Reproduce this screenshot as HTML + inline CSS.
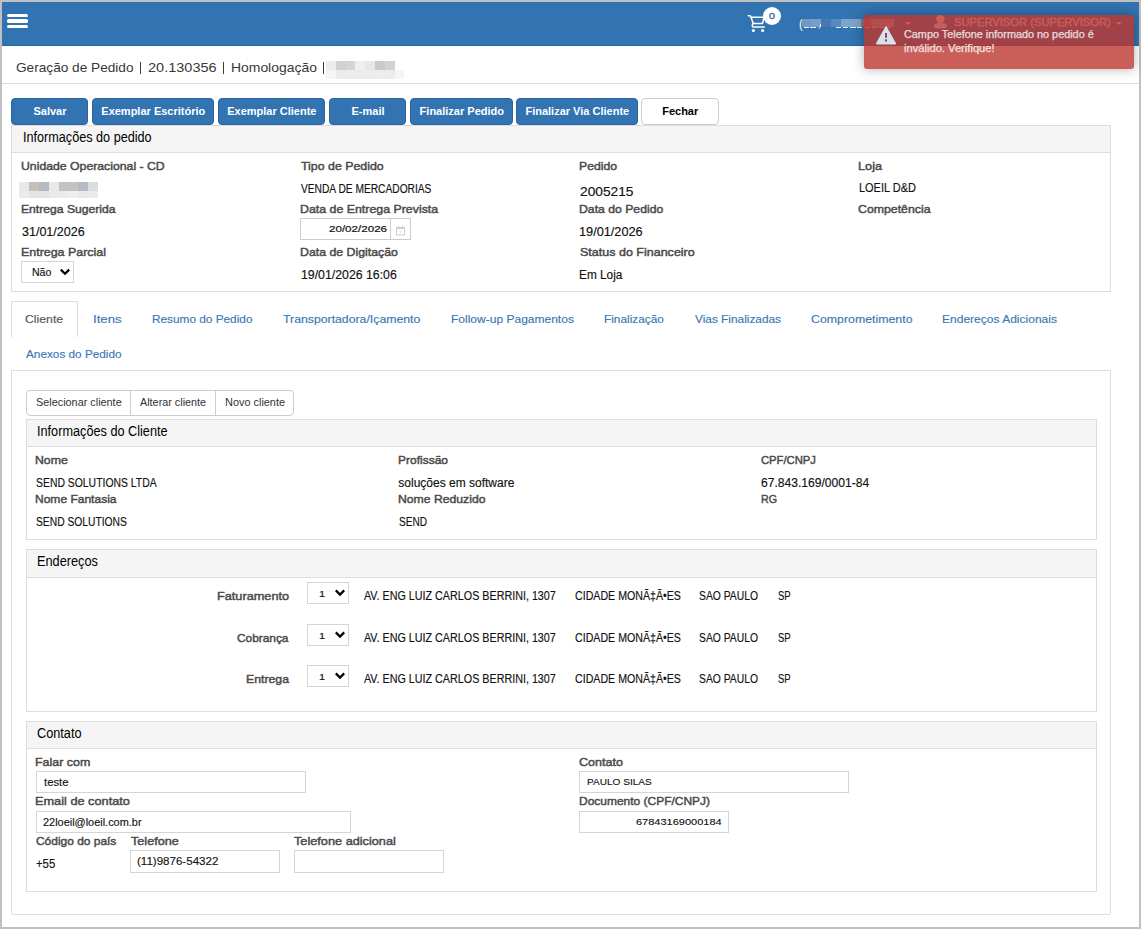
<!DOCTYPE html>
<html><head><meta charset="utf-8"><title>Geração de Pedido</title>
<style>
html,body{margin:0;padding:0}
body{width:1141px;height:929px;position:relative;overflow:hidden;background:#c0c0c0;font-family:'Liberation Sans', sans-serif}
.t{position:absolute;line-height:0;white-space:nowrap}
.b{position:absolute}
</style></head><body>
<div class="b" style="left:2px;top:2px;width:1137px;height:925px;background:#fff"></div>
<div class="b" style="left:2px;top:2px;width:1137px;height:44px;background:#3273b1;border-bottom:1px solid #2367a6;box-sizing:border-box"></div>
<div class="b" style="left:7px;top:13.9px;width:21px;height:3.3px;border-radius:1.6px;background:#fff"></div>
<div class="b" style="left:7px;top:19.4px;width:21px;height:3.3px;border-radius:1.6px;background:#fff"></div>
<div class="b" style="left:7px;top:24.7px;width:21px;height:3.3px;border-radius:1.6px;background:#fff"></div>
<svg class="b" style="left:744px;top:12px" width="24" height="24" viewBox="0 0 24 24">
<path d="M4.2 3.7 H6.4 L9.3 11.4 H18.6 L20 5.2 H7.2" fill="none" stroke="#fff" stroke-width="1.5" stroke-linejoin="round" stroke-linecap="round"/>
<path d="M9.3 11.4 L8.4 12.9 Q7.9 15 9.8 15 H20.3" fill="none" stroke="#fff" stroke-width="1.5" stroke-linecap="round"/>
<circle cx="9.4" cy="18.5" r="1.6" fill="#fff"/><circle cx="18.6" cy="18.5" r="1.6" fill="#fff"/>
</svg>
<div class="b" style="left:763px;top:7px;width:18px;height:18px;border-radius:50%;background:#fff"></div>
<div class="t" style="left:768.78px;top:10px;font:normal 9.5px 'Liberation Sans', sans-serif;color:#3273b1;transform:scaleX(1.1243);transform-origin:0 0;-webkit-text-stroke:0.4px #3273b1;">0</div>
<div class="t" style="left:799.06px;top:16px;font:normal 13px 'Liberation Sans', sans-serif;color:#fff;transform:scaleX(0.8571);transform-origin:0 0;">(</div>
<div class="b" style="left:802px;top:19px;width:9px;height:8px;background:#7199c5"></div>
<div class="b" style="left:811px;top:19px;width:10px;height:8px;background:#76a0cb"></div>
<div class="b" style="left:821px;top:19px;width:10px;height:8px;background:#4679b3"></div>
<div class="b" style="left:831px;top:19px;width:10px;height:8px;background:#5789c0"></div>
<div class="b" style="left:841px;top:19px;width:9px;height:8px;background:#78a6cf"></div>
<div class="b" style="left:850px;top:19px;width:11px;height:8px;background:#7aa3c8"></div>
<div class="b" style="left:861px;top:19px;width:10px;height:8px;background:#9a6a7a"></div>
<div class="b" style="left:871px;top:19px;width:23px;height:8px;background:#90aecf"></div>
<div class="b" style="left:804px;top:27px;width:5px;height:1.3000000000000007px;background:rgba(255,255,255,0.9)"></div>
<div class="b" style="left:810px;top:27px;width:6px;height:1.3000000000000007px;background:rgba(255,255,255,0.9)"></div>
<div class="b" style="left:836px;top:27px;width:5px;height:1.3000000000000007px;background:rgba(255,255,255,0.9)"></div>
<div class="b" style="left:843px;top:27px;width:5px;height:1.3000000000000007px;background:rgba(255,255,255,0.9)"></div>
<div class="b" style="left:850px;top:27px;width:6px;height:1.3000000000000007px;background:rgba(255,255,255,0.9)"></div>
<div class="b" style="left:857px;top:27px;width:5px;height:1.3000000000000007px;background:rgba(255,255,255,0.9)"></div>
<div class="b" style="left:865px;top:27px;width:5px;height:1.3000000000000007px;background:rgba(255,255,255,0.9)"></div>
<div class="b" style="left:872px;top:27px;width:5px;height:1.3000000000000007px;background:rgba(255,255,255,0.9)"></div>
<div class="b" style="left:879px;top:27px;width:5px;height:1.3000000000000007px;background:rgba(255,255,255,0.9)"></div>
<div class="b" style="left:886px;top:27px;width:5px;height:1.3000000000000007px;background:rgba(255,255,255,0.9)"></div>
<div class="b" style="left:817px;top:24px;width:3px;height:5px;border-right:1.3px solid #fff;border-radius:0 0 4px 0"></div>
<div class="b" style="left:905px;top:22px;width:0;height:0;border-left:3px solid transparent;border-right:3px solid transparent;border-top:3px solid #fff"></div>
<svg class="b" style="left:933px;top:15px" width="15" height="14" viewBox="0 0 15 14">
<circle cx="7.4" cy="4.1" r="4.2" fill="#fff"/><path d="M0.9 11 Q0.9 8.2 4 8.2 H10.8 Q13.9 8.2 13.9 11 Q13.9 13.6 7.4 13.6 Q0.9 13.6 0.9 11 Z" fill="#fff"/></svg>
<div class="t" style="left:953.89px;top:16px;font:normal 11px 'Liberation Sans', sans-serif;color:#fff;transform:scaleX(1.0162);transform-origin:0 0;-webkit-text-stroke:0.35px #fff;">SUPERVISOR (SUPERVISOR)</div>
<div class="b" style="left:1116px;top:22px;width:0;height:0;border-left:3px solid transparent;border-right:3px solid transparent;border-top:3px solid #fff"></div>
<div class="t" style="left:15.54px;top:60px;font:normal 13px 'Liberation Sans', sans-serif;color:#383838;transform:scaleX(1.0489);transform-origin:0 0;">Geração de Pedido</div>
<div class="t" style="left:147.90px;top:60px;font:normal 13px 'Liberation Sans', sans-serif;color:#383838;transform:scaleX(1.1180);transform-origin:0 0;">20.130356</div>
<div class="t" style="left:230.73px;top:60px;font:normal 13px 'Liberation Sans', sans-serif;color:#383838;transform:scaleX(1.0705);transform-origin:0 0;">Homologação</div>
<div class="b" style="left:140px;top:62px;width:1px;height:12px;background:#3a3a3a"></div>
<div class="b" style="left:223px;top:62px;width:1px;height:12px;background:#3a3a3a"></div>
<div class="b" style="left:323px;top:62px;width:1px;height:12px;background:#3a3a3a"></div>
<div class="b" style="left:326px;top:61px;width:10px;height:9px;background:#ececec"></div>
<div class="b" style="left:336px;top:61px;width:10px;height:9px;background:#d0d1d3"></div>
<div class="b" style="left:346px;top:61px;width:9px;height:9px;background:#d4d5d6"></div>
<div class="b" style="left:355px;top:61px;width:10px;height:9px;background:#efefef"></div>
<div class="b" style="left:365px;top:61px;width:10px;height:9px;background:#e8e7e5"></div>
<div class="b" style="left:375px;top:61px;width:10px;height:9px;background:#c9c9ca"></div>
<div class="b" style="left:385px;top:61px;width:10px;height:9px;background:#d1d2d4"></div>
<div class="b" style="left:326px;top:70px;width:10px;height:8.5px;background:#f5f5f5"></div>
<div class="b" style="left:336px;top:70px;width:10px;height:8.5px;background:#ebebeb"></div>
<div class="b" style="left:346px;top:70px;width:9px;height:8.5px;background:#ececec"></div>
<div class="b" style="left:355px;top:70px;width:10px;height:8.5px;background:#ebebeb"></div>
<div class="b" style="left:365px;top:70px;width:10px;height:8.5px;background:#ececec"></div>
<div class="b" style="left:375px;top:70px;width:10px;height:8.5px;background:#ededed"></div>
<div class="b" style="left:385px;top:70px;width:10px;height:8.5px;background:#ebebeb"></div>
<div class="b" style="left:395px;top:70px;width:9px;height:8.5px;background:#f5f5f5"></div>
<div class="b" style="left:2px;top:83px;width:1137px;height:1px;background:#ddd"></div>
<div class="b" style="left:11px;top:98px;width:77px;height:27px;background:#3274b2;border:1px solid #2a65a0;box-sizing:border-box;border-radius:4px"></div>
<div class="t" style="left:33.44px;top:105px;font:bold 11px 'Liberation Sans', sans-serif;color:#fff;">Salvar</div>
<div class="b" style="left:92px;top:98px;width:122px;height:27px;background:#3274b2;border:1px solid #2a65a0;box-sizing:border-box;border-radius:4px"></div>
<div class="t" style="left:101.31px;top:105px;font:bold 11px 'Liberation Sans', sans-serif;color:#fff;">Exemplar Escritório</div>
<div class="b" style="left:218px;top:98px;width:107px;height:27px;background:#3274b2;border:1px solid #2a65a0;box-sizing:border-box;border-radius:4px"></div>
<div class="t" style="left:227.19px;top:105px;font:bold 11px 'Liberation Sans', sans-serif;color:#fff;">Exemplar Cliente</div>
<div class="b" style="left:329px;top:98px;width:77px;height:27px;background:#3274b2;border:1px solid #2a65a0;box-sizing:border-box;border-radius:4px"></div>
<div class="t" style="left:351.50px;top:105px;font:bold 11px 'Liberation Sans', sans-serif;color:#fff;">E-mail</div>
<div class="b" style="left:410px;top:98px;width:103px;height:27px;background:#3274b2;border:1px solid #2a65a0;box-sizing:border-box;border-radius:4px"></div>
<div class="t" style="left:419.62px;top:105px;font:bold 11px 'Liberation Sans', sans-serif;color:#fff;">Finalizar Pedido</div>
<div class="b" style="left:516px;top:98px;width:122px;height:27px;background:#3274b2;border:1px solid #2a65a0;box-sizing:border-box;border-radius:4px"></div>
<div class="t" style="left:525.44px;top:105px;font:bold 11px 'Liberation Sans', sans-serif;color:#fff;">Finalizar Via Cliente</div>
<div class="b" style="left:641px;top:98px;width:78px;height:27px;background:#fff;border:1px solid #ccc;box-sizing:border-box;border-radius:4px"></div>
<div class="t" style="left:662.19px;top:105px;font:bold 11px 'Liberation Sans', sans-serif;color:#000;">Fechar</div>
<div class="b" style="left:11px;top:125px;width:1100px;height:167px;border:1px solid #ddd;box-sizing:border-box"></div>
<div class="b" style="left:12px;top:126px;width:1098px;height:26px;background:#f5f5f5;border-bottom:1px solid #ddd"></div>
<div class="t" style="left:22.57px;top:129px;font:normal 14px 'Liberation Sans', sans-serif;color:#000;transform:scaleX(0.9031);transform-origin:0 0;">Informações do pedido</div>
<div class="t" style="left:20.87px;top:160px;font:normal 11.5px 'Liberation Sans', sans-serif;color:#4a4a4a;transform:scaleX(1.0653);transform-origin:0 0;-webkit-text-stroke:0.45px #4a4a4a;">Unidade Operacional - CD</div>
<div class="t" style="left:300.83px;top:160px;font:normal 11.5px 'Liberation Sans', sans-serif;color:#4a4a4a;transform:scaleX(1.0756);transform-origin:0 0;-webkit-text-stroke:0.45px #4a4a4a;">Tipo de Pedido</div>
<div class="t" style="left:579.17px;top:160px;font:normal 11.5px 'Liberation Sans', sans-serif;color:#4a4a4a;transform:scaleX(1.0644);transform-origin:0 0;-webkit-text-stroke:0.45px #4a4a4a;">Pedido</div>
<div class="t" style="left:857.83px;top:160px;font:normal 11.5px 'Liberation Sans', sans-serif;color:#4a4a4a;transform:scaleX(1.1067);transform-origin:0 0;-webkit-text-stroke:0.45px #4a4a4a;">Loja</div>
<div class="b" style="left:19px;top:182px;width:10px;height:9px;background:#e8e8e8"></div>
<div class="b" style="left:29px;top:182px;width:10px;height:9px;background:#c8bfbb"></div>
<div class="b" style="left:39px;top:182px;width:10px;height:9px;background:#b8bac2"></div>
<div class="b" style="left:49px;top:182px;width:10px;height:9px;background:#e8eaea"></div>
<div class="b" style="left:59px;top:182px;width:9px;height:9px;background:#c4c3c2"></div>
<div class="b" style="left:68px;top:182px;width:10px;height:9px;background:#c4c3c2"></div>
<div class="b" style="left:78px;top:182px;width:10px;height:9px;background:#b5bac5"></div>
<div class="b" style="left:88px;top:182px;width:10px;height:9px;background:#dcdde0"></div>
<div class="b" style="left:19px;top:191px;width:10px;height:7px;background:#ebebeb"></div>
<div class="b" style="left:29px;top:191px;width:10px;height:7px;background:#e8e4e3"></div>
<div class="b" style="left:39px;top:191px;width:10px;height:7px;background:#e3e5e4"></div>
<div class="b" style="left:49px;top:191px;width:10px;height:7px;background:#e9eaeb"></div>
<div class="b" style="left:59px;top:191px;width:9px;height:7px;background:#eaeaea"></div>
<div class="b" style="left:68px;top:191px;width:10px;height:7px;background:#efeeea"></div>
<div class="b" style="left:78px;top:191px;width:10px;height:7px;background:#e8e9eb"></div>
<div class="b" style="left:88px;top:191px;width:10px;height:7px;background:#eaebed"></div>
<div class="t" style="left:301.30px;top:182px;font:normal 12px 'Liberation Sans', sans-serif;color:#111;transform:scaleX(0.8504);transform-origin:0 0;-webkit-text-stroke:0.15px #111;">VENDA DE MERCADORIAS</div>
<div class="t" style="left:579.54px;top:184px;font:normal 13px 'Liberation Sans', sans-serif;color:#111;transform:scaleX(1.0566);transform-origin:0 0;-webkit-text-stroke:0.15px #111;">2005215</div>
<div class="t" style="left:858.59px;top:181px;font:normal 12px 'Liberation Sans', sans-serif;color:#111;transform:scaleX(0.9136);transform-origin:0 0;-webkit-text-stroke:0.15px #111;">LOEIL D&amp;D</div>
<div class="t" style="left:20.88px;top:203px;font:normal 11.5px 'Liberation Sans', sans-serif;color:#4a4a4a;transform:scaleX(1.0553);transform-origin:0 0;-webkit-text-stroke:0.45px #4a4a4a;">Entrega Sugerida</div>
<div class="t" style="left:300.16px;top:203px;font:normal 11.5px 'Liberation Sans', sans-serif;color:#4a4a4a;transform:scaleX(1.0752);transform-origin:0 0;-webkit-text-stroke:0.45px #4a4a4a;">Data de Entrega Prevista</div>
<div class="t" style="left:579.17px;top:203px;font:normal 11.5px 'Liberation Sans', sans-serif;color:#4a4a4a;transform:scaleX(1.0631);transform-origin:0 0;-webkit-text-stroke:0.45px #4a4a4a;">Data do Pedido</div>
<div class="t" style="left:858.26px;top:203px;font:normal 11.5px 'Liberation Sans', sans-serif;color:#4a4a4a;transform:scaleX(1.0709);transform-origin:0 0;-webkit-text-stroke:0.45px #4a4a4a;">Competência</div>
<div class="t" style="left:21.91px;top:225px;font:normal 12px 'Liberation Sans', sans-serif;color:#111;transform:scaleX(1.0436);transform-origin:0 0;-webkit-text-stroke:0.15px #111;">31/01/2026</div>
<div class="b" style="left:300px;top:218px;width:111px;height:22px;border:1px solid #ccc;box-sizing:border-box;background:#fff"></div>
<div class="b" style="left:390px;top:218px;width:1px;height:22px;background:#ccc"></div>
<div class="t" style="left:329.39px;top:223px;font:normal 9.5px 'Liberation Sans', sans-serif;color:#111;transform:scaleX(1.2204);transform-origin:0 0;-webkit-text-stroke:0.2px #111;">20/02/2026</div>
<svg class="b" style="left:395px;top:225px" width="11" height="11" viewBox="0 0 11 11">
<rect x="1.5" y="2.5" width="8" height="7.5" fill="none" stroke="#cfcfcf" stroke-width="1"/>
<rect x="1.5" y="2" width="8" height="2" fill="#cfcfcf"/><rect x="3" y="1" width="1" height="1.5" fill="#cfcfcf"/><rect x="7" y="1" width="1" height="1.5" fill="#cfcfcf"/>
<path d="M4.5 5.8 H6.5 L5.3 8.5" fill="none" stroke="#dcdcdc" stroke-width="0.8"/></svg>
<div class="t" style="left:579.27px;top:225px;font:normal 12px 'Liberation Sans', sans-serif;color:#111;transform:scaleX(1.0593);transform-origin:0 0;-webkit-text-stroke:0.15px #111;">19/01/2026</div>
<div class="t" style="left:20.85px;top:246px;font:normal 11.5px 'Liberation Sans', sans-serif;color:#4a4a4a;transform:scaleX(1.0802);transform-origin:0 0;-webkit-text-stroke:0.45px #4a4a4a;">Entrega Parcial</div>
<div class="t" style="left:300.16px;top:246px;font:normal 11.5px 'Liberation Sans', sans-serif;color:#4a4a4a;transform:scaleX(1.0709);transform-origin:0 0;-webkit-text-stroke:0.45px #4a4a4a;">Data de Digitação</div>
<div class="t" style="left:579.56px;top:246px;font:normal 11.5px 'Liberation Sans', sans-serif;color:#4a4a4a;transform:scaleX(1.0878);transform-origin:0 0;-webkit-text-stroke:0.45px #4a4a4a;">Status do Financeiro</div>
<div class="b" style="left:21px;top:261px;width:53px;height:22px;border:1px solid #d5d5d5;box-sizing:border-box;background:#fff"></div>
<div class="t" style="left:32.16px;top:266px;font:normal 11px 'Liberation Sans', sans-serif;color:#111;transform:scaleX(0.9589);transform-origin:0 0;-webkit-text-stroke:0.15px #111;">Não</div>
<svg class="b" style="left:59px;top:268px" width="12" height="8" viewBox="0 0 12 8"><path d="M1.8 1.6 L6 5.8 L10.2 1.6" fill="none" stroke="#000" stroke-width="2.2"/></svg>
<div class="t" style="left:301.10px;top:268px;font:normal 12px 'Liberation Sans', sans-serif;color:#111;transform:scaleX(1.0250);transform-origin:0 0;-webkit-text-stroke:0.15px #111;">19/01/2026 16:06</div>
<div class="t" style="left:579.21px;top:268px;font:normal 12px 'Liberation Sans', sans-serif;color:#111;transform:scaleX(0.9855);transform-origin:0 0;-webkit-text-stroke:0.15px #111;">Em Loja</div>
<div class="b" style="left:11px;top:301px;width:67px;height:36px;border:1px solid #ddd;border-bottom:none;box-sizing:border-box;background:#fff"></div>
<div class="t" style="left:25.37px;top:313px;font:normal 11.5px 'Liberation Sans', sans-serif;color:#555;transform:scaleX(1.0647);transform-origin:0 0;-webkit-text-stroke:0.15px #555;">Cliente</div>
<div class="t" style="left:93.16px;top:313px;font:normal 11.5px 'Liberation Sans', sans-serif;color:#3a77b5;transform:scaleX(1.1447);transform-origin:0 0;-webkit-text-stroke:0.15px #3a77b5;">Itens</div>
<div class="t" style="left:151.80px;top:313px;font:normal 11.5px 'Liberation Sans', sans-serif;color:#3a77b5;transform:scaleX(1.0269);transform-origin:0 0;-webkit-text-stroke:0.15px #3a77b5;">Resumo do Pedido</div>
<div class="t" style="left:283.03px;top:313px;font:normal 11.5px 'Liberation Sans', sans-serif;color:#3a77b5;transform:scaleX(1.0669);transform-origin:0 0;-webkit-text-stroke:0.15px #3a77b5;">Transportadora/Içamento</div>
<div class="t" style="left:450.69px;top:313px;font:normal 11.5px 'Liberation Sans', sans-serif;color:#3a77b5;transform:scaleX(1.0449);transform-origin:0 0;-webkit-text-stroke:0.15px #3a77b5;">Follow-up Pagamentos</div>
<div class="t" style="left:603.90px;top:313px;font:normal 11.5px 'Liberation Sans', sans-serif;color:#3a77b5;transform:scaleX(1.0303);transform-origin:0 0;-webkit-text-stroke:0.15px #3a77b5;">Finalização</div>
<div class="t" style="left:694.70px;top:313px;font:normal 11.5px 'Liberation Sans', sans-serif;color:#3a77b5;transform:scaleX(1.0298);transform-origin:0 0;-webkit-text-stroke:0.15px #3a77b5;">Vias Finalizadas</div>
<div class="t" style="left:810.66px;top:313px;font:normal 11.5px 'Liberation Sans', sans-serif;color:#3a77b5;transform:scaleX(1.0731);transform-origin:0 0;-webkit-text-stroke:0.15px #3a77b5;">Comprometimento</div>
<div class="t" style="left:941.79px;top:313px;font:normal 11.5px 'Liberation Sans', sans-serif;color:#3a77b5;transform:scaleX(1.0455);transform-origin:0 0;-webkit-text-stroke:0.15px #3a77b5;">Endereços Adicionais</div>
<div class="t" style="left:25.90px;top:348px;font:normal 11.5px 'Liberation Sans', sans-serif;color:#3a77b5;transform:scaleX(1.0237);transform-origin:0 0;-webkit-text-stroke:0.15px #3a77b5;">Anexos do Pedido</div>
<div class="b" style="left:11px;top:370px;width:1100px;height:545px;border:1px solid #ddd;box-sizing:border-box;border-radius:0 0 2px 2px"></div>
<div class="b" style="left:26px;top:390px;width:268px;height:26px;border:1px solid #ccc;box-sizing:border-box;border-radius:4px;background:#fff"></div>
<div class="b" style="left:130px;top:390px;width:1px;height:26px;background:#ccc"></div>
<div class="b" style="left:215px;top:390px;width:1px;height:26px;background:#ccc"></div>
<div class="t" style="left:35.53px;top:396px;font:normal 11.5px 'Liberation Sans', sans-serif;color:#333;transform:scaleX(0.9437);transform-origin:0 0;">Selecionar cliente</div>
<div class="t" style="left:140.20px;top:396px;font:normal 11.5px 'Liberation Sans', sans-serif;color:#333;transform:scaleX(0.9405);transform-origin:0 0;">Alterar cliente</div>
<div class="t" style="left:224.77px;top:396px;font:normal 11.5px 'Liberation Sans', sans-serif;color:#333;transform:scaleX(0.9487);transform-origin:0 0;">Novo cliente</div>
<div class="b" style="left:26px;top:419px;width:1071px;height:121px;border:1px solid #ddd;box-sizing:border-box"></div>
<div class="b" style="left:27px;top:420px;width:1069px;height:26px;background:#f5f5f5;border-bottom:1px solid #ddd"></div>
<div class="t" style="left:36.67px;top:423px;font:normal 14px 'Liberation Sans', sans-serif;color:#000;transform:scaleX(0.9069);transform-origin:0 0;">Informações do Cliente</div>
<div class="t" style="left:35.47px;top:454px;font:normal 11.5px 'Liberation Sans', sans-serif;color:#4a4a4a;transform:scaleX(1.0673);transform-origin:0 0;-webkit-text-stroke:0.45px #4a4a4a;">Nome</div>
<div class="t" style="left:398.29px;top:454px;font:normal 11.5px 'Liberation Sans', sans-serif;color:#4a4a4a;transform:scaleX(1.0430);transform-origin:0 0;-webkit-text-stroke:0.45px #4a4a4a;">Profissão</div>
<div class="t" style="left:760.91px;top:454px;font:normal 11.5px 'Liberation Sans', sans-serif;color:#4a4a4a;transform:scaleX(0.9779);transform-origin:0 0;-webkit-text-stroke:0.45px #4a4a4a;">CPF/CNPJ</div>
<div class="t" style="left:36.27px;top:476px;font:normal 12px 'Liberation Sans', sans-serif;color:#111;transform:scaleX(0.8671);transform-origin:0 0;-webkit-text-stroke:0.15px #111;">SEND SOLUTIONS LTDA</div>
<div class="t" style="left:398.32px;top:476px;font:normal 12px 'Liberation Sans', sans-serif;color:#111;-webkit-text-stroke:0.15px #111;">soluções em software</div>
<div class="t" style="left:760.67px;top:476px;font:normal 12px 'Liberation Sans', sans-serif;color:#111;transform:scaleX(1.0075);transform-origin:0 0;-webkit-text-stroke:0.15px #111;">67.843.169/0001-84</div>
<div class="t" style="left:35.49px;top:493px;font:normal 11.5px 'Liberation Sans', sans-serif;color:#4a4a4a;transform:scaleX(1.0454);transform-origin:0 0;-webkit-text-stroke:0.45px #4a4a4a;">Nome Fantasia</div>
<div class="t" style="left:398.27px;top:493px;font:normal 11.5px 'Liberation Sans', sans-serif;color:#4a4a4a;transform:scaleX(1.0612);transform-origin:0 0;-webkit-text-stroke:0.45px #4a4a4a;">Nome Reduzido</div>
<div class="t" style="left:760.58px;top:493px;font:normal 11.5px 'Liberation Sans', sans-serif;color:#4a4a4a;transform:scaleX(0.9342);transform-origin:0 0;-webkit-text-stroke:0.45px #4a4a4a;">RG</div>
<div class="t" style="left:36.27px;top:515px;font:normal 12px 'Liberation Sans', sans-serif;color:#111;transform:scaleX(0.8571);transform-origin:0 0;-webkit-text-stroke:0.15px #111;">SEND SOLUTIONS</div>
<div class="t" style="left:398.68px;top:515px;font:normal 12px 'Liberation Sans', sans-serif;color:#111;transform:scaleX(0.8403);transform-origin:0 0;-webkit-text-stroke:0.15px #111;">SEND</div>
<div class="b" style="left:26px;top:549px;width:1071px;height:163px;border:1px solid #ddd;box-sizing:border-box"></div>
<div class="b" style="left:27px;top:550px;width:1069px;height:27px;background:#f5f5f5;border-bottom:1px solid #ddd"></div>
<div class="t" style="left:36.78px;top:553px;font:normal 14px 'Liberation Sans', sans-serif;color:#000;transform:scaleX(0.9103);transform-origin:0 0;">Endereços</div>
<div class="t" style="left:217.13px;top:590px;font:normal 11.5px 'Liberation Sans', sans-serif;color:#4a4a4a;transform:scaleX(1.1053);transform-origin:0 0;-webkit-text-stroke:0.45px #4a4a4a;">Faturamento</div>
<div class="b" style="left:307px;top:582px;width:42px;height:22px;border:1px solid #d5d5d5;box-sizing:border-box;background:#fff"></div>
<div class="t" style="left:318.63px;top:589px;font:normal 9px 'Liberation Sans', sans-serif;color:#111;transform:scaleX(1.2250);transform-origin:0 0;-webkit-text-stroke:0.15px #111;">1</div>
<svg class="b" style="left:334px;top:589px" width="12" height="8" viewBox="0 0 12 8"><path d="M1.8 1.4 L6 5.6 L10.2 1.4" fill="none" stroke="#000" stroke-width="2.2"/></svg>
<div class="t" style="left:363.80px;top:589px;font:normal 12px 'Liberation Sans', sans-serif;color:#111;transform:scaleX(0.8960);transform-origin:0 0;-webkit-text-stroke:0.15px #111;">AV. ENG LUIZ CARLOS BERRINI, 1307</div>
<div class="t" style="left:575.05px;top:589px;font:normal 12px 'Liberation Sans', sans-serif;color:#111;transform:scaleX(0.8862);transform-origin:0 0;-webkit-text-stroke:0.15px #111;">CIDADE MONÃ‡Ã•ES</div>
<div class="t" style="left:698.97px;top:589px;font:normal 12px 'Liberation Sans', sans-serif;color:#111;transform:scaleX(0.8609);transform-origin:0 0;-webkit-text-stroke:0.15px #111;">SAO PAULO</div>
<div class="t" style="left:777.50px;top:589px;font:normal 12px 'Liberation Sans', sans-serif;color:#111;transform:scaleX(0.7933);transform-origin:0 0;-webkit-text-stroke:0.15px #111;">SP</div>
<div class="t" style="left:237.28px;top:632px;font:normal 11.5px 'Liberation Sans', sans-serif;color:#4a4a4a;transform:scaleX(1.0316);transform-origin:0 0;-webkit-text-stroke:0.45px #4a4a4a;">Cobrança</div>
<div class="b" style="left:307px;top:624px;width:42px;height:22px;border:1px solid #d5d5d5;box-sizing:border-box;background:#fff"></div>
<div class="t" style="left:318.63px;top:631px;font:normal 9px 'Liberation Sans', sans-serif;color:#111;transform:scaleX(1.2250);transform-origin:0 0;-webkit-text-stroke:0.15px #111;">1</div>
<svg class="b" style="left:334px;top:631px" width="12" height="8" viewBox="0 0 12 8"><path d="M1.8 1.4 L6 5.6 L10.2 1.4" fill="none" stroke="#000" stroke-width="2.2"/></svg>
<div class="t" style="left:363.80px;top:631px;font:normal 12px 'Liberation Sans', sans-serif;color:#111;transform:scaleX(0.8960);transform-origin:0 0;-webkit-text-stroke:0.15px #111;">AV. ENG LUIZ CARLOS BERRINI, 1307</div>
<div class="t" style="left:575.05px;top:631px;font:normal 12px 'Liberation Sans', sans-serif;color:#111;transform:scaleX(0.8862);transform-origin:0 0;-webkit-text-stroke:0.15px #111;">CIDADE MONÃ‡Ã•ES</div>
<div class="t" style="left:698.97px;top:631px;font:normal 12px 'Liberation Sans', sans-serif;color:#111;transform:scaleX(0.8609);transform-origin:0 0;-webkit-text-stroke:0.15px #111;">SAO PAULO</div>
<div class="t" style="left:777.50px;top:631px;font:normal 12px 'Liberation Sans', sans-serif;color:#111;transform:scaleX(0.7933);transform-origin:0 0;-webkit-text-stroke:0.15px #111;">SP</div>
<div class="t" style="left:245.77px;top:673px;font:normal 11.5px 'Liberation Sans', sans-serif;color:#4a4a4a;transform:scaleX(1.0672);transform-origin:0 0;-webkit-text-stroke:0.45px #4a4a4a;">Entrega</div>
<div class="b" style="left:307px;top:665px;width:42px;height:22px;border:1px solid #d5d5d5;box-sizing:border-box;background:#fff"></div>
<div class="t" style="left:318.63px;top:672px;font:normal 9px 'Liberation Sans', sans-serif;color:#111;transform:scaleX(1.2250);transform-origin:0 0;-webkit-text-stroke:0.15px #111;">1</div>
<svg class="b" style="left:334px;top:672px" width="12" height="8" viewBox="0 0 12 8"><path d="M1.8 1.4 L6 5.6 L10.2 1.4" fill="none" stroke="#000" stroke-width="2.2"/></svg>
<div class="t" style="left:363.80px;top:672px;font:normal 12px 'Liberation Sans', sans-serif;color:#111;transform:scaleX(0.8960);transform-origin:0 0;-webkit-text-stroke:0.15px #111;">AV. ENG LUIZ CARLOS BERRINI, 1307</div>
<div class="t" style="left:575.05px;top:672px;font:normal 12px 'Liberation Sans', sans-serif;color:#111;transform:scaleX(0.8862);transform-origin:0 0;-webkit-text-stroke:0.15px #111;">CIDADE MONÃ‡Ã•ES</div>
<div class="t" style="left:698.97px;top:672px;font:normal 12px 'Liberation Sans', sans-serif;color:#111;transform:scaleX(0.8609);transform-origin:0 0;-webkit-text-stroke:0.15px #111;">SAO PAULO</div>
<div class="t" style="left:777.50px;top:672px;font:normal 12px 'Liberation Sans', sans-serif;color:#111;transform:scaleX(0.7933);transform-origin:0 0;-webkit-text-stroke:0.15px #111;">SP</div>
<div class="b" style="left:26px;top:721px;width:1071px;height:171px;border:1px solid #ddd;box-sizing:border-box"></div>
<div class="b" style="left:27px;top:722px;width:1069px;height:26px;background:#f5f5f5;border-bottom:1px solid #ddd"></div>
<div class="t" style="left:37.23px;top:725px;font:normal 14px 'Liberation Sans', sans-serif;color:#000;transform:scaleX(0.9086);transform-origin:0 0;">Contato</div>
<div class="t" style="left:35.45px;top:756px;font:normal 11.5px 'Liberation Sans', sans-serif;color:#4a4a4a;transform:scaleX(1.0831);transform-origin:0 0;-webkit-text-stroke:0.45px #4a4a4a;">Falar com</div>
<div class="b" style="left:36px;top:771px;width:270px;height:22px;border:1px solid #d5d5d5;box-sizing:border-box;background:#fff"></div>
<div class="t" style="left:43.86px;top:777px;font:normal 10px 'Liberation Sans', sans-serif;color:#111;transform:scaleX(1.1314);transform-origin:0 0;-webkit-text-stroke:0.12px #111;">teste</div>
<div class="t" style="left:35.43px;top:795px;font:normal 11.5px 'Liberation Sans', sans-serif;color:#4a4a4a;transform:scaleX(1.1082);transform-origin:0 0;-webkit-text-stroke:0.45px #4a4a4a;">Email de contato</div>
<div class="b" style="left:36px;top:811px;width:315px;height:22px;border:1px solid #d5d5d5;box-sizing:border-box;background:#fff"></div>
<div class="t" style="left:43.45px;top:817px;font:normal 10px 'Liberation Sans', sans-serif;color:#111;transform:scaleX(1.0923);transform-origin:0 0;-webkit-text-stroke:0.12px #111;">22loeil@loeil.com.br</div>
<div class="t" style="left:35.88px;top:835px;font:normal 11.5px 'Liberation Sans', sans-serif;color:#4a4a4a;transform:scaleX(1.0383);transform-origin:0 0;-webkit-text-stroke:0.45px #4a4a4a;">Código do país</div>
<div class="t" style="left:130.73px;top:835px;font:normal 11.5px 'Liberation Sans', sans-serif;color:#4a4a4a;transform:scaleX(1.0995);transform-origin:0 0;-webkit-text-stroke:0.45px #4a4a4a;">Telefone</div>
<div class="t" style="left:294.42px;top:835px;font:normal 11.5px 'Liberation Sans', sans-serif;color:#4a4a4a;transform:scaleX(1.1062);transform-origin:0 0;-webkit-text-stroke:0.45px #4a4a4a;">Telefone adicional</div>
<div class="t" style="left:36.23px;top:857px;font:normal 12px 'Liberation Sans', sans-serif;color:#111;transform:scaleX(0.9445);transform-origin:0 0;-webkit-text-stroke:0.15px #111;">+55</div>
<div class="b" style="left:130px;top:850px;width:150px;height:23px;border:1px solid #d5d5d5;box-sizing:border-box;background:#fff"></div>
<div class="t" style="left:137.28px;top:856px;font:normal 10px 'Liberation Sans', sans-serif;color:#111;transform:scaleX(1.1546);transform-origin:0 0;-webkit-text-stroke:0.12px #111;">(11)9876-54322</div>
<div class="b" style="left:294px;top:850px;width:150px;height:23px;border:1px solid #d5d5d5;box-sizing:border-box;background:#fff"></div>
<div class="t" style="left:579.45px;top:756px;font:normal 11.5px 'Liberation Sans', sans-serif;color:#4a4a4a;transform:scaleX(1.0923);transform-origin:0 0;-webkit-text-stroke:0.45px #4a4a4a;">Contato</div>
<div class="b" style="left:579px;top:771px;width:270px;height:22px;border:1px solid #d5d5d5;box-sizing:border-box;background:#fff"></div>
<div class="t" style="left:587.10px;top:776px;font:normal 9.5px 'Liberation Sans', sans-serif;color:#111;transform:scaleX(1.0605);transform-origin:0 0;-webkit-text-stroke:0.12px #111;">PAULO SILAS</div>
<div class="t" style="left:579.09px;top:795px;font:normal 11.5px 'Liberation Sans', sans-serif;color:#4a4a4a;transform:scaleX(1.0407);transform-origin:0 0;-webkit-text-stroke:0.45px #4a4a4a;">Documento (CPF/CNPJ)</div>
<div class="b" style="left:579px;top:811px;width:150px;height:22px;border:1px solid #d5d5d5;box-sizing:border-box;background:#fff"></div>
<div class="t" style="left:635.82px;top:816px;font:normal 9.5px 'Liberation Sans', sans-serif;color:#111;transform:scaleX(1.1583);transform-origin:0 0;-webkit-text-stroke:0.12px #111;">67843169000184</div>
<div class="b" style="left:864px;top:15px;width:270px;height:54px;border-radius:3px;background:#bd362f;opacity:0.8;box-shadow:0 0 12px rgba(0,0,0,0.38);overflow:hidden">
<svg style="position:absolute;left:11px;top:11px" width="22" height="20" viewBox="0 0 22 20">
<path d="M11 1.2 L20.3 17.6 H1.7 Z" fill="#fff" stroke="#fff" stroke-width="1.6" stroke-linejoin="round"/>
<rect x="10" y="7" width="2" height="4.8" fill="#bd362f"/><rect x="10" y="13.3" width="2" height="2.2" fill="#bd362f"/></svg>
</div>
<div class="t" style="left:903.96px;top:29px;font:normal 10px 'Liberation Sans', sans-serif;color:#fff;transform:scaleX(1.0845);transform-origin:0 0;opacity:0.8;-webkit-text-stroke:0.25px #fff;">Campo Telefone informado no pedido é</div>
<div class="t" style="left:903.80px;top:43px;font:normal 10px 'Liberation Sans', sans-serif;color:#fff;transform:scaleX(1.1165);transform-origin:0 0;opacity:0.8;-webkit-text-stroke:0.25px #fff;">inválido. Verifique!</div>
</body></html>
